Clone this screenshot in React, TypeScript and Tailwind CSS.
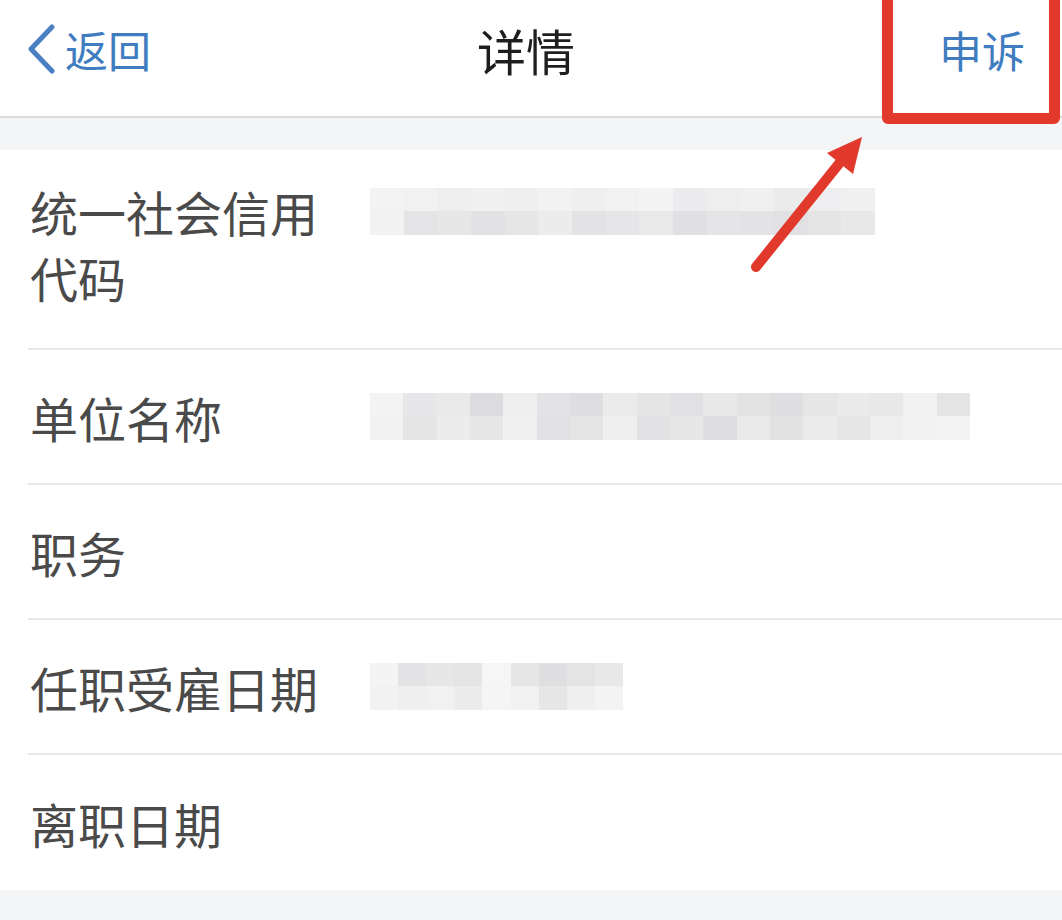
import React from "react";

const cjk = "font-['Noto_Sans_CJK_SC','Noto_Sans',sans-serif]";

type Blur = { width: string; top: string[]; bottom: string[] };

const blurs: Record<string, Blur> = {
  code: {
    width: "w-[505px]",
    top: [
      "bg-[#f3f3f4]", "bg-[#f1f1f2]", "bg-[#eeeeef]", "bg-[#f0f0f1]", "bg-[#efeff0]", "bg-[#f2f2f3]",
      "bg-[#efeff0]", "bg-[#f1f1f2]", "bg-[#f4f4f5]", "bg-[#ececee]", "bg-[#eeeeef]", "bg-[#f0f0f1]",
      "bg-[#ebebec]", "bg-[#eeeef0]", "bg-[#f0f0f1]",
    ],
    bottom: [
      "bg-[#f2f2f3]", "bg-[#e4e4e6]", "bg-[#e7e7e8]", "bg-[#e2e2e4]", "bg-[#e6e6e7]", "bg-[#ececed]",
      "bg-[#e3e3e5]", "bg-[#e6e6e8]", "bg-[#e9e9ea]", "bg-[#e0e0e2]", "bg-[#e5e5e7]", "bg-[#e3e3e5]",
      "bg-[#e1e1e3]", "bg-[#e5e5e6]", "bg-[#e8e8e9]",
    ],
  },
  name: {
    width: "w-[600px]",
    top: [
      "bg-[#f3f3f4]", "bg-[#e7e7e9]", "bg-[#e9e9ea]", "bg-[#dcdcde]", "bg-[#eeeeef]", "bg-[#e3e3e5]",
      "bg-[#dedee0]", "bg-[#ebebec]", "bg-[#e5e5e6]", "bg-[#e1e1e3]", "bg-[#e8e8e9]", "bg-[#e3e3e4]",
      "bg-[#dfdfe1]", "bg-[#e6e6e7]", "bg-[#eaeaeb]", "bg-[#e8e8e9]", "bg-[#f1f1f2]", "bg-[#e4e4e5]",
    ],
    bottom: [
      "bg-[#f2f2f3]", "bg-[#e5e5e6]", "bg-[#ececed]", "bg-[#e6e6e7]", "bg-[#f0f0f1]", "bg-[#e1e1e3]",
      "bg-[#e4e4e5]", "bg-[#efeff0]", "bg-[#e2e2e4]", "bg-[#e7e7e8]", "bg-[#dfdfe1]", "bg-[#e9e9ea]",
      "bg-[#e2e2e3]", "bg-[#ebebec]", "bg-[#e6e6e7]", "bg-[#eeeeef]", "bg-[#f2f2f3]", "bg-[#f4f4f5]",
    ],
  },
  date: {
    width: "w-[253px]",
    top: [
      "bg-[#f4f4f5]", "bg-[#e3e3e5]", "bg-[#e7e7e8]", "bg-[#e5e5e6]", "bg-[#f6f6f7]", "bg-[#e6e6e7]",
      "bg-[#dfdfe1]", "bg-[#e4e4e5]", "bg-[#e8e8e9]",
    ],
    bottom: [
      "bg-[#f2f2f3]", "bg-[#efeff0]", "bg-[#f1f1f2]", "bg-[#ececed]", "bg-[#f5f5f6]", "bg-[#f1f1f2]",
      "bg-[#e6e6e7]", "bg-[#efeff0]", "bg-[#f3f3f4]",
    ],
  },
};

function Pixelated({ blur }: { blur: Blur }) {
  return (
    <div className={`${blur.width} flex flex-col`}>
      <div className="flex h-[23px]">
        {blur.top.map((c, i) => (
          <div key={i} className={`flex-1 ${c}`} />
        ))}
      </div>
      <div className="flex h-[24px]">
        {blur.bottom.map((c, i) => (
          <div key={i} className={`flex-1 ${c}`} />
        ))}
      </div>
    </div>
  );
}

const rows: { label: string; blur?: Blur; tall?: boolean }[] = [
  { label: "统一社会信用代码", blur: blurs.code, tall: true },
  { label: "单位名称", blur: blurs.name },
  { label: "职务" },
  { label: "任职受雇日期", blur: blurs.date },
  { label: "离职日期" },
];

export default function App() {
  return (
    <div className={`relative w-[1062px] h-[920px] overflow-hidden bg-[#f4f5f7] ${cjk}`}>
      {/* Nav bar */}
      <div className="h-[118px] bg-white border-b-2 border-[#dcdcde] flex items-center px-[27px] pb-[18px]">
        <div className="flex-1 flex items-center gap-[10px] text-[#3f7cc0]">
          <svg width="28" height="50" viewBox="0 0 28 50" className="shrink-0">
            <path d="M25 3 L4 25 L25 47" fill="none" stroke="#4a80c2" strokeWidth="5" strokeLinecap="round" strokeLinejoin="round" />
          </svg>
          <span className="text-[43px] leading-none">返回</span>
        </div>
        <div className="text-[49px] leading-none text-[#1e1e1e]">详情</div>
        <div className="flex-1 flex justify-end pr-[10px]">
          <span className="text-[43px] leading-none text-[#3f7cc0]">申诉</span>
        </div>
      </div>

      {/* Details list */}
      <div className="mt-[32px] bg-white">
        {rows.map((row, i) => (
          <div key={row.label} className="pl-[28px]">
            <div
              className={`flex ${row.tall ? "h-[200px] pt-[28px] items-start" : "h-[135px] items-center"} ${
                i < rows.length - 1 ? "border-b-2 border-[#e8e8ea]" : ""
              }`}
            >
              <div className="w-[300px] pl-[2px] text-[48px] leading-[66px] text-[#4a4a4a] break-all">{row.label}</div>
              {row.blur && (
                <div className={`ml-[42px] ${row.tall ? "mt-[10px]" : ""}`}>
                  <Pixelated blur={row.blur} />
                </div>
              )}
            </div>
          </div>
        ))}
      </div>

      {/* Annotation: red box */}
      <div className="absolute left-[882px] top-[-12px] w-[178px] h-[136px] border-[11px] border-[#e2392d] rounded-[6px]" />

      {/* Annotation: red arrow */}
      <svg className="absolute left-0 top-0" width="1062" height="920" viewBox="0 0 1062 920">
        <line x1="756" y1="267" x2="842" y2="160" stroke="#e2392d" strokeWidth="10" strokeLinecap="round" />
        <polygon points="862,137 853,174 827,153" fill="#e2392d" />
      </svg>
    </div>
  );
}
